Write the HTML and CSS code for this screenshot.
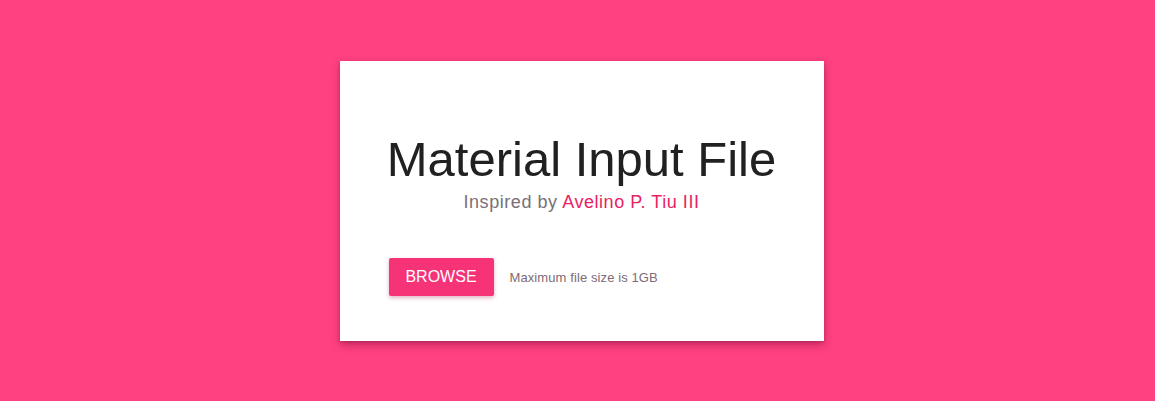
FILE: index.html
```html
<!DOCTYPE html>
<html>
<head>
<meta charset="utf-8">
<link rel="stylesheet" href="styles.css">
</head>
<body>
<main class="page">
  <section class="card">
    <h1 class="title">Material Input File</h1>
    <p class="subtitle">Inspired by <a class="author" href="#">Avelino P. Tiu III</a></p>
    <div class="upload">
      <button class="browse">BROWSE</button>
      <span class="hint">Maximum file size is 1GB</span>
    </div>
  </section>
</main>
</body>
</html>
```

FILE: styles.css
```css
html, body {
  margin: 0;
  padding: 0;
  height: 100%;
  background: #ff4081;
  font-family: "Liberation Sans", Arial, sans-serif;
}
.page {
  display: flex;
  justify-content: center;
  padding: 61px 0 0 8px;
}
.card {
  width: 484px;
  height: 280px;
  box-sizing: border-box;
  background: #fff;
  padding: 70px 49px 0;
  box-shadow: 0 4px 8px rgba(90, 0, 40, 0.35), 0 1px 3px rgba(90, 0, 40, 0.2);
}
.title {
  margin: 0 -20px;
  white-space: nowrap;
  text-align: center;
  font-weight: normal;
  font-size: 49px;
  line-height: 56px;
  color: #212121;
}
.subtitle {
  margin: 5px 0 0;
  text-align: center;
  font-size: 18px;
  letter-spacing: 0.55px;
  line-height: 21px;
  color: #777077;
}
.author {
  color: #e91e63;
  text-decoration: none;
}
.upload {
  display: flex;
  align-items: center;
  gap: 16px;
  margin-top: 45px;
}
.browse {
  width: 105px;
  height: 38px;
  border: none;
  border-radius: 2px;
  background: #f73378;
  color: #fff;
  font-family: "Liberation Sans", Arial, sans-serif;
  font-size: 16px;
  padding: 0;
  box-shadow: 0 2px 4px rgba(160, 0, 60, 0.3);
}
.hint {
  font-size: 13px;
  letter-spacing: 0.1px;
  color: #7d6b75;
}
```
